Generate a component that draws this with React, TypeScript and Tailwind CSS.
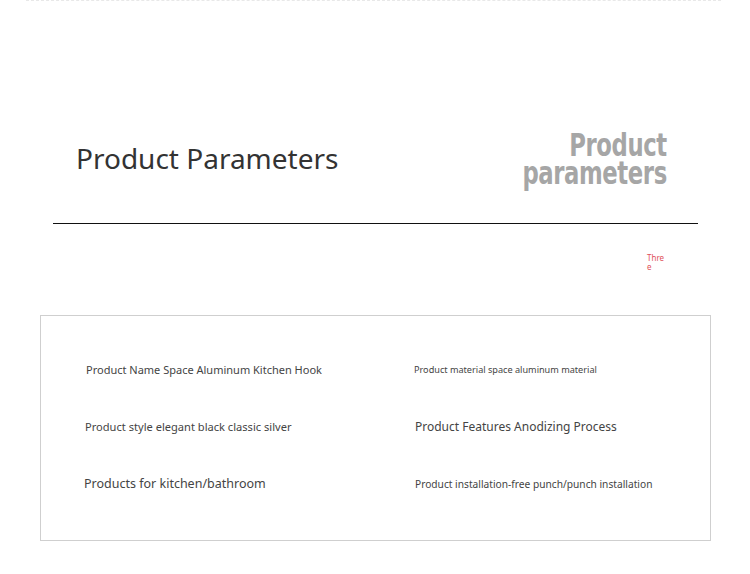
import React from "react";

const rows: { left: string; lcls: string; right: string; rcls: string }[] = [
  {
    left: "Product Name Space Aluminum Kitchen Hook",
    lcls: "pl-[45px] text-[11px]",
    right: "Product material space aluminum material",
    rcls: "pl-[0px] text-[9.15px]",
  },
  {
    left: "Product style elegant black classic silver",
    lcls: "pl-[44px] text-[11.1px]",
    right: "Product Features Anodizing Process",
    rcls: "pl-[1px] text-[12px]",
  },
  {
    left: "Products for kitchen/bathroom",
    lcls: "pl-[43px] text-[12.5px]",
    right: "Product installation-free punch/punch installation",
    rcls: "pl-[1px] text-[10.2px]",
  },
];

export default function App() {
  return (
    <div className="w-[750px] h-[574px] bg-white overflow-hidden relative" style={{ fontFamily: '"Noto Sans", "Open Sans", sans-serif' }}>
      <div className="ml-[26px] w-[695px] h-0 border-t border-dashed border-[#e8e8e8]" />
      <div className="pt-[130px] flex justify-between items-start pl-[76px] pr-[83px]">
        <h1 className="mt-[13px] text-[28px] leading-[28px] text-[#333] font-normal">Product Parameters</h1>
        <div
          className="origin-right scale-x-[0.79] flex flex-col items-end text-[32px] leading-[28px] font-bold text-[#a6a6a6] tracking-[-0.5px]"
          style={{ fontFamily: '"DejaVu Sans Condensed", "DejaVu Sans", sans-serif' }}
        >
          <span>Product</span>
          <span>parameters</span>
        </div>
      </div>
      <div className="mt-[36px] ml-[53px] w-[645px] h-px bg-[#111]" />
      <div className="mt-[29px] ml-[647px] w-[18px] text-[8px] leading-[9px] text-[#e0505a] break-all">Three</div>
      <div className="mt-[44px] ml-[40px] w-[671px] h-[226px] border border-[#cfcfcf] pt-[25px]">
        {rows.map((r, i) => (
          <div key={i} className="grid grid-cols-[373px_1fr] h-[57.5px] items-center text-[#444]">
            <div className={r.lcls}>{r.left}</div>
            <div className={r.rcls}>{r.right}</div>
          </div>
        ))}
      </div>
    </div>
  );
}
